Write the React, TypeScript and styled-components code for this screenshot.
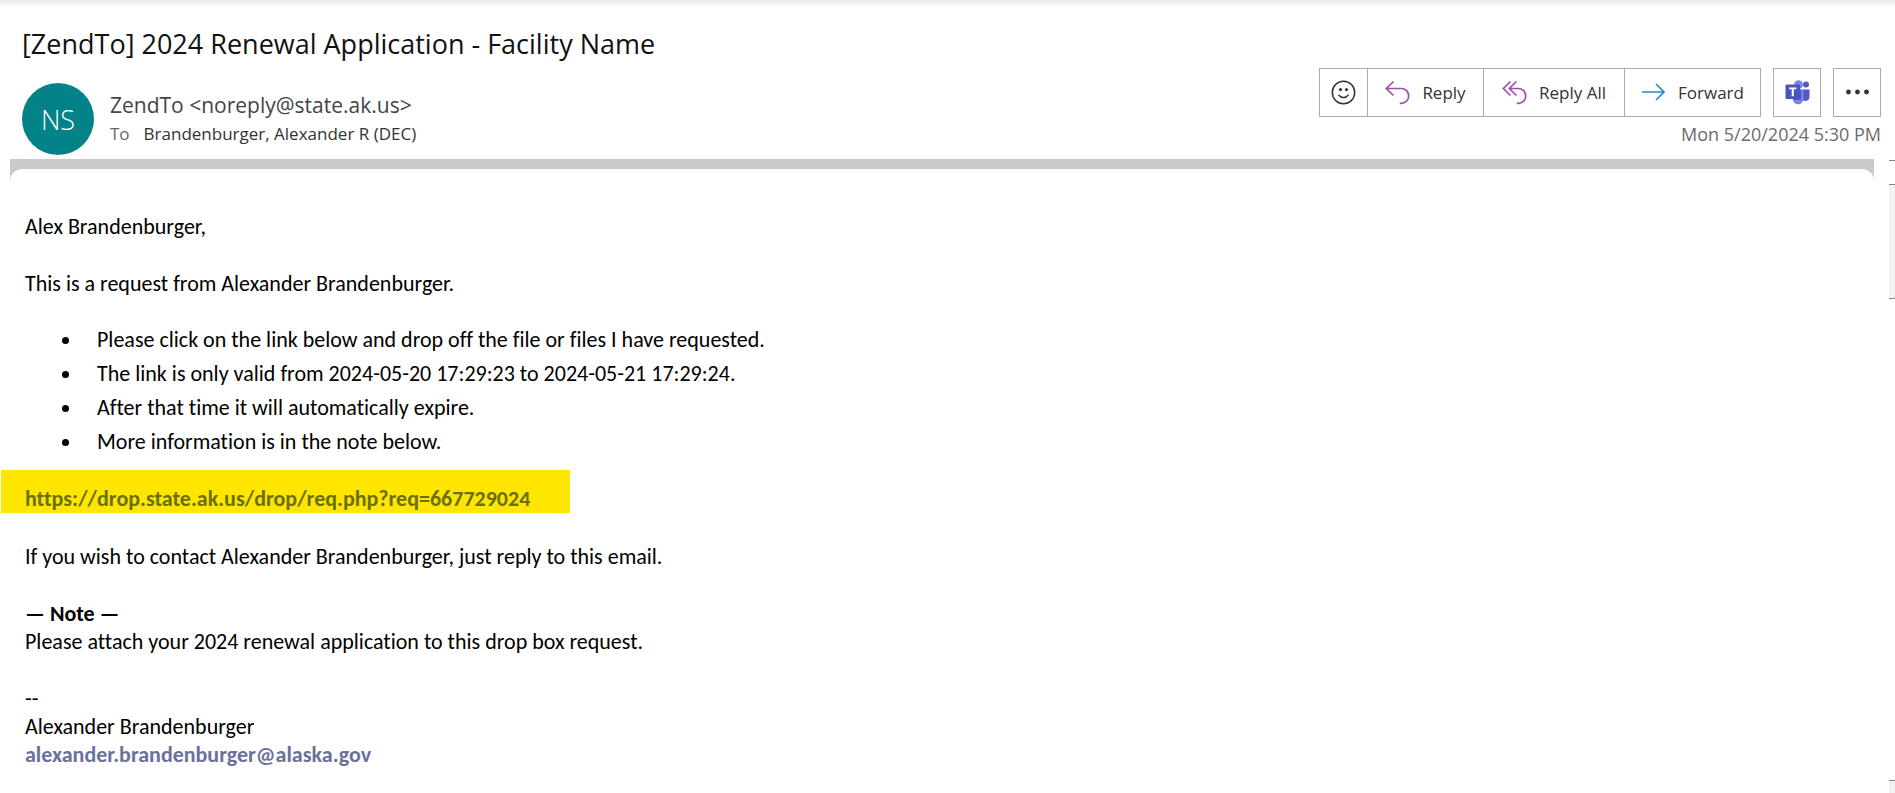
import React from "react";
import styled, { createGlobalStyle } from "styled-components";

const ui = `"Open Sans", "Liberation Sans", sans-serif`;
const prose = `Calibri, Carlito, Lato, "Liberation Sans", sans-serif`;

const GlobalStyle = createGlobalStyle`
  * { box-sizing: border-box; }
  body { margin: 0; background: #fff; font-family: ${ui}; }
`;

const Page = styled.div`
  display: flex;
  flex-direction: column;
  min-height: 100vh;
`;

const TopShade = styled.div`
  height: 8px;
  background: linear-gradient(#e9e9e9, #fff);
`;

const Header = styled.header`
  padding: 16px 14px 0 22px;
`;

const Subject = styled.h1`
  margin: 0;
  font-size: 27px;
  line-height: 40px;
  font-weight: 400;
  color: #111;
`;

const Meta = styled.div`
  display: flex;
  height: 95px;
  padding-top: 4px;
`;

const Avatar = styled.div`
  display: flex;
  align-items: center;
  justify-content: center;
  width: 72px;
  height: 72px;
  margin: 15px 16px 0 0;
  border-radius: 50%;
  background: #038387;
  color: #fff;
  font-size: 27px;
  font-weight: 300;
`;

const People = styled.div`
  flex: 1;
  padding-top: 21px;
`;

const Sender = styled.div`
  font-size: 21px;
  line-height: 32px;
  color: #444;
`;

const Recipients = styled.div`
  display: flex;
  gap: 14px;
  font-size: 17px;
  line-height: 26px;
  color: #333;
`;

const Muted = styled.span`
  color: #666;
`;

const Side = styled.div`
  display: flex;
  flex-direction: column;
  align-items: flex-end;
`;

const Toolbar = styled.div`
  display: flex;
  gap: 12px;
`;

const Group = styled.div`
  display: flex;

  & > * + * {
    margin-left: -1px;
  }
`;

const ToolButton = styled.button<{ $width?: number }>`
  display: flex;
  align-items: center;
  justify-content: center;
  gap: 12px;
  width: ${(p) => p.$width ?? 48}px;
  height: 49px;
  padding: 0;
  border: 1px solid #acacac;
  background: #fff;
  color: #333;
  font-family: ${ui};
  font-size: 17px;
  white-space: nowrap;
`;

const DateText = styled.time`
  font-size: 18px;
  line-height: 34px;
  color: #6b6b6b;
`;

const Reading = styled.div`
  display: flex;
  flex: 1;
`;

const Content = styled.main`
  flex: 1;
  margin-right: 15px;
`;

const Band = styled.div`
  height: 22px;
  margin-left: 10px;
  padding-top: 10px;
  background: #c9cacc;
`;

const BandCurve = styled.div`
  height: 12px;
  border-radius: 12px 12px 0 0;
  background: #fff;
`;

const Message = styled.article`
  padding-top: 32px;
  font-family: ${prose};
  font-size: 22px;
  line-height: 28px;
  font-variant-ligatures: none;
  color: #000;
`;

const Paragraph = styled.p<{ $gap?: number }>`
  margin: 0 0 ${(p) => p.$gap ?? 29}px;
  padding-left: 25px;

  &:last-child {
    margin-bottom: 0;
  }
`;

const List = styled.ul`
  margin: 0 0 11px;
  padding-left: 97px;
  line-height: 34px;
  list-style: none;
`;

const Item = styled.li`
  display: flex;
  align-items: center;
  &::before {
    content: "";
    width: 7px;
    height: 7px;
    margin: 0 28px 0 -35px;
    border-radius: 50%;
    background: #000;
  }
`;

const Highlight = styled.p`
  width: fit-content;
  margin: 0 0 30px 1px;
  padding: 15px 40px 0 24px;
  background: #ffe600;
`;

const MessageLink = styled.a<{ $tone: string }>`
  color: ${(p) => p.$tone};
  font-weight: 700;
  text-decoration: none;
`;

const ScrollRail = styled.div`
  display: flex;
  flex-direction: column;
  width: 6px;
  padding-top: 1px;
`;

const RailPart = styled.div<{ $h?: number; $fill?: boolean }>`
  flex: ${(p) => (p.$h ? `0 0 ${p.$h}px` : "1")};
  border-top: 1px solid #858585;
  background: ${(p) => (p.$fill ? "#f2f2f2" : "#fff")};
`;

const Smile = () => (
  <svg width="25" height="25" viewBox="0 0 25 25" fill="none" stroke="#333" strokeWidth="1.5" strokeLinecap="round">
    <circle cx="12.5" cy="12.5" r="11.2" />
    <circle cx="9.5" cy="9.6" r="1.6" fill="#333" stroke="none" />
    <circle cx="15.5" cy="9.6" r="1.6" fill="#333" stroke="none" />
    <path d="M7.8 15.2c2.2 3.2 7.2 3.2 9.4 0" />
  </svg>
);

const ReplyIcon = () => (
  <svg width="25" height="25" viewBox="0 0 25 25" fill="none" stroke="#a04fa8" strokeWidth="1.7">
    <path d="M8.5 1.5 1.3 8.5l7.2 7M1.3 8.5h15a7.4 7.4 0 0 1 0 14.8h-1.5" />
  </svg>
);

const ReplyAllIcon = () => (
  <svg width="25" height="25" viewBox="0 0 25 25" fill="none" stroke="#a04fa8" strokeWidth="1.7">
    <path d="M8.5 1.5 1.3 8.5l7.2 7M14.5 1.5 7.3 8.5l7.2 7M7.3 8.5h9a7.4 7.4 0 0 1 0 14.8h-1.5" />
  </svg>
);

const ForwardIcon = () => (
  <svg width="25" height="25" viewBox="0 0 25 25" fill="none" stroke="#2b88c8" strokeWidth="1.7">
    <path d="M1 12h22M15 4l8 8-8 8" />
  </svg>
);

const TeamsIcon = () => (
  <svg width="25" height="25" viewBox="0 0 25 25">
    <circle cx="21" cy="4.6" r="3" fill="#5059c9" />
    <path d="M17 9.5h7.5v7.2a4.2 4.2 0 0 1-7.5 2.6z" fill="#5059c9" />
    <circle cx="13.5" cy="4.7" r="4.4" fill="#7b83eb" />
    <path d="M8 9.5h10.6v8.2c0 4-2.4 6.6-5.6 6.6-2.6 0-4.4-1.6-5-4.3z" fill="#7b83eb" />
    <path d="M8 9.5h8.2v9.2a1.3 1.3 0 0 1-1.3 1.3H8z" fill="#3c419c" opacity=".6" />
    <rect x=".5" y="4.5" width="14.5" height="14.5" rx="1.3" fill="#4b53bc" />
    <path d="M4.1 7.4h7.3v1.9H8.8v6.9H6.7V9.3H4.1z" fill="#fff" />
  </svg>
);

const MoreIcon = () => (
  <svg width="25" height="25" viewBox="0 0 25 25" fill="#333">
    <circle cx="3.5" cy="12" r="2.4" />
    <circle cx="12.5" cy="12" r="2.4" />
    <circle cx="21.5" cy="12" r="2.4" />
  </svg>
);

const instructions = [
  "Please click on the link below and drop off the file or files I have requested.",
  "The link is only valid from 2024-05-20 17:29:23 to 2024-05-21 17:29:24.",
  "After that time it will automatically expire.",
  "More information is in the note below.",
];

export default function App() {
  return (
    <Page>
      <GlobalStyle />
      <TopShade />
      <Header>
        <Subject>[ZendTo] 2024 Renewal Application - Facility Name</Subject>
        <Meta>
          <Avatar>NS</Avatar>
          <People>
            <Sender>ZendTo &lt;noreply@state.ak.us&gt;</Sender>
            <Recipients>
              <Muted>To</Muted>
              <span>Brandenburger, Alexander R (DEC)</span>
            </Recipients>
          </People>
          <Side>
            <Toolbar>
              <Group>
                <ToolButton $width={49} aria-label="React"><Smile /></ToolButton>
                <ToolButton $width={117}><ReplyIcon />Reply</ToolButton>
                <ToolButton $width={142}><ReplyAllIcon />Reply All</ToolButton>
                <ToolButton $width={137}><ForwardIcon />Forward</ToolButton>
              </Group>
              <ToolButton aria-label="Share to Teams"><TeamsIcon /></ToolButton>
              <ToolButton aria-label="More actions"><MoreIcon /></ToolButton>
            </Toolbar>
            <DateText dateTime="2024-05-20T17:30">Mon 5/20/2024 5:30 PM</DateText>
          </Side>
        </Meta>
      </Header>
      <Reading>
        <Content>
          <Band><BandCurve /></Band>
          <Message>
            <Paragraph>Alex Brandenburger,</Paragraph>
            <Paragraph $gap={25}>This is a request from Alexander Brandenburger.</Paragraph>
            <List>
              {instructions.map((text) => <Item key={text}>{text}</Item>)}
            </List>
            <Highlight>
              <MessageLink $tone="#6b6f00" href="https://drop.state.ak.us/drop/req.php?req=667729024">
                https://drop.state.ak.us/drop/req.php?req=667729024
              </MessageLink>
            </Highlight>
            <Paragraph>If you wish to contact Alexander Brandenburger, just reply to this email.</Paragraph>
            <Paragraph>
              <strong>— Note —</strong><br />
              Please attach your 2024 renewal application to this drop box request.
            </Paragraph>
            <Paragraph>
              --<br />
              Alexander Brandenburger<br />
              <MessageLink $tone="#6a719c" href="mailto:alexander.brandenburger@alaska.gov">
                alexander.brandenburger@alaska.gov
              </MessageLink>
            </Paragraph>
          </Message>
        </Content>
        <ScrollRail aria-hidden="true">
          <RailPart $h={24} />
          <RailPart $h={114} $fill />
          <RailPart />
          <RailPart $h={13} $fill />
        </ScrollRail>
      </Reading>
    </Page>
  );
}
